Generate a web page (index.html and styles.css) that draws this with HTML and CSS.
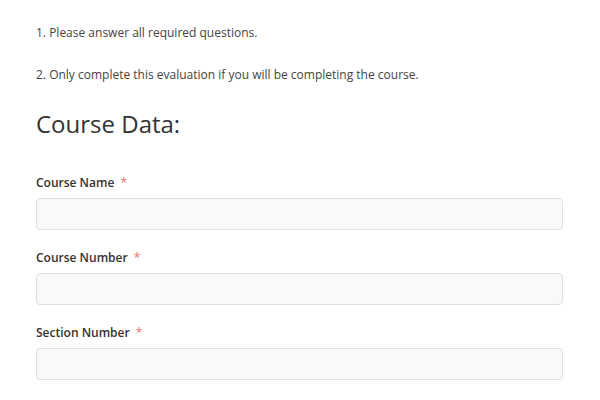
FILE: index.html
```html
<!DOCTYPE html>
<html>
<head>
<meta charset="utf-8">
<link rel="stylesheet" href="styles.css">
</head>
<body>
<div class="page">
  <p class="note">1. Please answer all required questions.</p>
  <p class="note">2. Only complete this evaluation if you will be completing the course.</p>
  <h2 class="section-title">Course Data:</h2>
  <div class="field">
    <label class="field-label">Course Name <span class="req">*</span></label>
    <input class="field-input" type="text">
  </div>
  <div class="field">
    <label class="field-label">Course Number <span class="req">*</span></label>
    <input class="field-input" type="text">
  </div>
  <div class="field">
    <label class="field-label">Section Number <span class="req">*</span></label>
    <input class="field-input" type="text">
  </div>
</div>
</body>
</html>
```
FILE: styles.css
```css
html, body {
  margin: 0;
  padding: 0;
  background: #ffffff;
}
body {
  font-family: "Open Sans", "Noto Sans", sans-serif;
  color: #333333;
}
.page {
  padding: 24px 37px 0 36px;
  display: flex;
  flex-direction: column;
}
.note {
  margin: 0 0 24px 0;
  font-size: 12px;
  line-height: 18px;
  color: #444444;
}
.section-title {
  margin: 0 0 35px 0;
  font-size: 24px;
  line-height: 32px;
  font-weight: 400;
  color: #333333;
}
.field {
  display: flex;
  flex-direction: column;
  margin-bottom: 20px;
}
.field-label {
  font-size: 12px;
  line-height: 16px;
  font-weight: 600;
  color: #333333;
  margin-bottom: 7px;
}
.req {
  color: #e87070;
  font-weight: 400;
  margin-left: 3px;
}
.field-input {
  box-sizing: border-box;
  width: 100%;
  height: 32px;
  margin: 0;
  border: 1px solid #dedfe3;
  border-radius: 4px;
  background: #f9f9f9;
}
```
